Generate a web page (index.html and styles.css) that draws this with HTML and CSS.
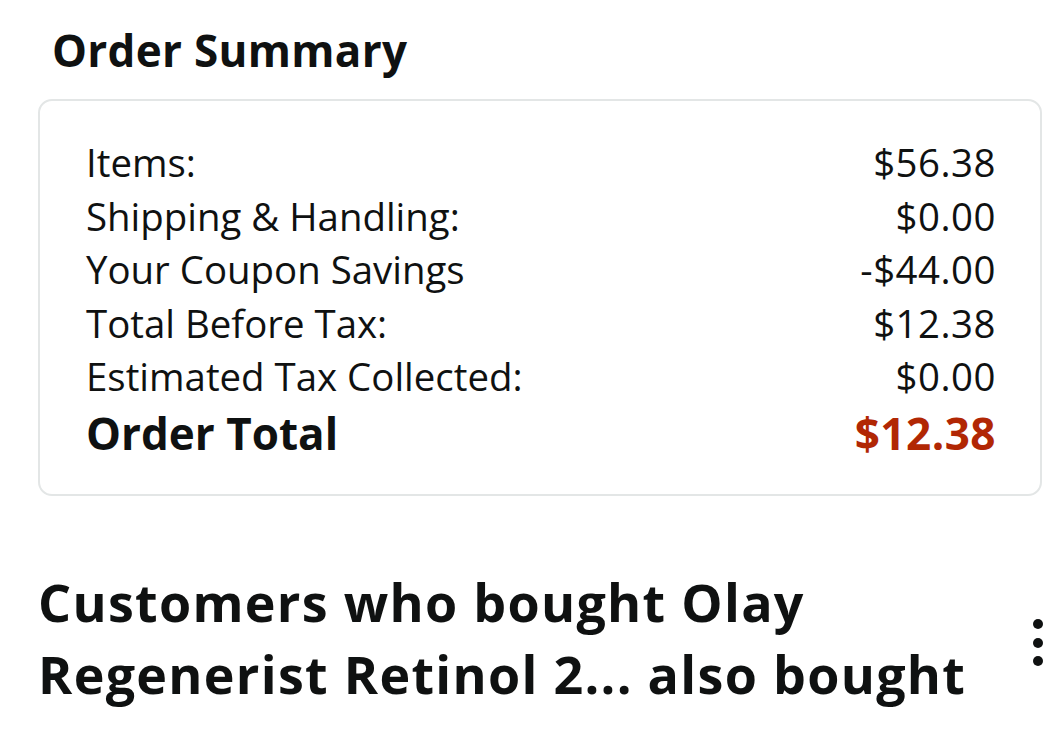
FILE: index.html
```html
<!DOCTYPE html>
<html lang="en">
<head>
	<meta charset="UTF-8">
	<meta name="viewport" content="width=device-width, initial-scale=1.0">
	<title>Order Summary</title>
	<link rel="stylesheet" href="styles.css">
</head>
<body>
	<div class="page">
		<h2 class="title">Order Summary</h2>

		<div class="summary">
			<div class="row"><span>Items:</span><span>$56.38</span></div>
			<div class="row"><span>Shipping &amp; Handling:</span><span>$0.00</span></div>
			<div class="row"><span>Your Coupon Savings</span><span>-$44.00</span></div>
			<div class="row"><span>Total Before Tax:</span><span>$12.38</span></div>
			<div class="row"><span>Estimated Tax Collected:</span><span>$0.00</span></div>
			<div class="row total"><span>Order Total</span><span class="price">$12.38</span></div>
		</div>

		<div class="related">
			<h2 class="related-title">Customers who bought Olay Regenerist Retinol 2... also bought</h2>
			<div class="more">
				<span></span><span></span><span></span>
			</div>
		</div>
	</div>
</body>
</html>
```

FILE: styles.css
```css
body {
	margin: 0;
	background: #fff;
	color: #0f1111;
	font-family: "Open Sans", "Noto Sans", sans-serif;
}

.page {
	padding: 20px 1px 0 38px;
}

.title {
	margin: 0 0 19px 14px;
	font-size: 44px;
	font-weight: 700;
	line-height: 60px;
	letter-spacing: 0.3px;
}

.summary {
	border: 2px solid #e3e6e6;
	border-radius: 14px;
	padding: 35px 44px 32px 46px;
}

.row {
	display: flex;
	justify-content: space-between;
	font-size: 38.4px;
	line-height: 53.5px;
}

.row span:last-child {
	letter-spacing: 0.5px;
}

.total {
	font-size: 44px;
	font-weight: 700;
	line-height: 58px;
}

.total .price {
	color: #b12704;
	letter-spacing: 2px;
}

.related {
	display: flex;
	align-items: center;
	justify-content: space-between;
	margin-top: 70px;
}

.related-title {
	margin: 0;
	width: 960px;
	font-size: 52px;
	font-weight: 700;
	line-height: 72px;
	letter-spacing: 1.3px;
}

.more {
	display: flex;
	flex-direction: column;
	gap: 8.5px;
	margin: 10px -1px 0 0;
}

.more span {
	width: 10px;
	height: 10px;
	border-radius: 50%;
	background: #0f1111;
}
```
